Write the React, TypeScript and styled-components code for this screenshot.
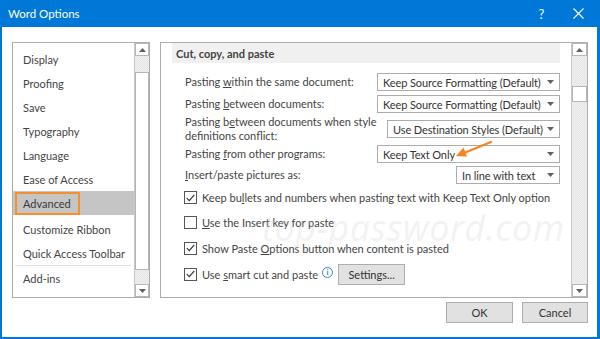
import React from "react";
import styled, { createGlobalStyle } from "styled-components";

const GlobalStyle = createGlobalStyle`
  html, body {
    margin: 0;
    padding: 0;
    background: #ffffff;
  }
  body {
    font-family: "Segoe UI", Lato, "Noto Sans", Arial, sans-serif;
    font-size: 11px;
    color: #444444;
  }
`;

const Window = styled.div`
  position: relative;
  width: 600px;
  height: 339px;
  box-sizing: border-box;
  display: flex;
  flex-direction: column;
  background: #0078d7;
  padding: 0 3px 2px 2px;
  overflow: hidden;
`;

const TitleBar = styled.div`
  height: 27px;
  flex-shrink: 0;
  display: flex;
  align-items: center;
  color: #ffffff;
  font-size: 11.5px;
  padding-left: 6px;
`;

const TitleText = styled.div`
  flex: 1;
`;

const TitleButton = styled.div`
  width: 37px;
  height: 27px;
  display: flex;
  align-items: center;
  justify-content: center;
  font-size: 13px;
`;

const Body = styled.div`
  flex: 1;
  background: #ffffff;
  display: flex;
  flex-direction: column;
  padding: 15px 9px 0 10px;
`;

const Panels = styled.div`
  display: flex;
  gap: 10px;
  height: 256px;
`;

const Panel = styled.div<{ $width?: number }>`
  box-sizing: border-box;
  ${(p) => (p.$width ? `width: ${p.$width}px; flex-shrink: 0;` : "flex: 1; min-width: 0;")}
  border: 1px solid #acacac;
  display: flex;
  overflow: hidden;
`;

const NavList = styled.div`
  flex: 1;
  display: flex;
  flex-direction: column;
  padding-top: 4px;
`;

const NavItem = styled.div<{ $selected?: boolean }>`
  height: 24px;
  flex-shrink: 0;
  display: flex;
  align-items: center;
  padding-left: 10px;
  white-space: nowrap;
  background: ${(p) => (p.$selected ? "#c5c5c5" : "transparent")};
  margin-bottom: ${(p) => (p.$selected ? "2px" : "0")};
`;

const Focus = styled.span`
  border: 2px solid #f5902a;
  margin-left: -8px;
  padding: 1px 7px 1px 6px;
  line-height: 17px;
  color: #3a3a3a;
`;

const NavSeparator = styled.div`
  height: 1px;
  margin: 0 3px 0 2px;
  background: #e2e2e2;
`;

const Scrollbar = styled.div<{ $width: number }>`
  width: ${(p) => p.$width}px;
  flex-shrink: 0;
  border-left: 1px solid #c8c8c8;
  display: flex;
  flex-direction: column;
`;

const ScrollButton = styled.div`
  height: 13px;
  flex-shrink: 0;
  box-sizing: border-box;
  border: 1px solid #b8b8b8;
  background: #ffffff;
  display: flex;
  align-items: center;
  justify-content: center;
`;

const Track = styled.div`
  flex: 1;
  display: flex;
  flex-direction: column;
  background: repeating-conic-gradient(#e3e3e3 0 25%, #f2f2f2 0 50%) 0 0 / 2px 2px;
`;

const Thumb = styled.div<{ $top: number; $height: number }>`
  margin-top: ${(p) => p.$top}px;
  height: ${(p) => p.$height}px;
  box-sizing: border-box;
  border: 1px solid #b5b5b5;
  background: #ffffff;
`;

const Content = styled.div`
  flex: 1;
  min-width: 0;
  padding: 0 11px 0 11px;
  display: flex;
  flex-direction: column;
`;

const SectionHeader = styled.div`
  height: 20px;
  flex-shrink: 0;
  display: flex;
  align-items: center;
  background: #f0f0f0;
  padding-left: 4px;
  font-weight: bold;
  color: #444444;
  margin-bottom: 8px;
`;

const OptionRow = styled.div<{ $height: number }>`
  height: ${(p) => p.$height}px;
  flex-shrink: 0;
  display: flex;
  align-items: center;
  padding-left: 13px;
  justify-content: space-between;
`;

const Label = styled.div`
  line-height: 14px;
  white-space: nowrap;
`;

const Select = styled.div<{ $width: number }>`
  width: ${(p) => p.$width}px;
  height: 18px;
  box-sizing: border-box;
  border: 1px solid #acacac;
  display: flex;
  align-items: center;
  padding: 0 5px 0 5px;
  color: #333333;
  flex-shrink: 0;
  letter-spacing: -0.1px;
`;

const SelectText = styled.span`
  flex: 1;
  min-width: 0;
  white-space: nowrap;
  overflow: hidden;
`;

const CheckRow = styled.div<{ $height?: number }>`
  height: ${(p) => p.$height ?? 25}px;
  flex-shrink: 0;
  display: flex;
  align-items: center;
  padding-left: 12px;
  gap: 5px;
  white-space: nowrap;
`;

const Box = styled.div`
  width: 13px;
  height: 13px;
  box-sizing: border-box;
  border: 1px solid #555555;
  background: #ffffff;
  display: flex;
  align-items: center;
  justify-content: center;
  flex-shrink: 0;
`;

const InfoIcon = styled.span`
  width: 9px;
  height: 9px;
  border: 1px solid #3c7fd1;
  border-radius: 50%;
  color: #3c7fd1;
  font-size: 8px;
  line-height: 9px;
  text-align: center;
  margin: -4px 0 0 -1px;
  font-weight: bold;
`;

const SmallButton = styled.div<{ $width: number }>`
  width: ${(p) => p.$width}px;
  height: 21px;
  box-sizing: border-box;
  border: 1px solid #adadad;
  background: #e1e1e1;
  display: flex;
  align-items: center;
  justify-content: center;
  color: #333333;
  flex-shrink: 0;
`;

const SettingsButton = styled(SmallButton)`
  margin-left: 0;
`;

const Footer = styled.div`
  display: flex;
  justify-content: flex-end;
  gap: 9px;
  padding-top: 4px;
`;

const Watermark = styled.div`
  position: absolute;
  left: 262px;
  top: 203px;
  font-family: "Noto Sans", sans-serif;
  font-style: italic;
  font-size: 36px;
  color: rgba(200, 200, 200, 0.22);
  pointer-events: none;
  letter-spacing: 0.5px;
`;

const ArrowOverlay = styled.svg`
  position: absolute;
  left: 450px;
  top: 136px;
  pointer-events: none;
`;

const Up = () => (
  <svg width="7" height="4" viewBox="0 0 7 4">
    <path d="M0 4 L3.5 0 L7 4 Z" fill="#606060" />
  </svg>
);

const Down = () => (
  <svg width="7" height="4" viewBox="0 0 7 4" style={{ flexShrink: 0 }}>
    <path d="M0 0 L3.5 4 L7 0 Z" fill="#606060" />
  </svg>
);

const Check = () => (
  <svg width="9" height="8" viewBox="0 0 9 8">
    <path d="M0.8 4.2 L3.3 6.7 L8.3 0.8" fill="none" stroke="#333" strokeWidth="1.2" />
  </svg>
);

function Dropdown({ width, children }: { width: number; children: React.ReactNode }) {
  return (
    <Select $width={width}>
      <SelectText>{children}</SelectText>
      <Down />
    </Select>
  );
}

function Checkbox({ checked }: { checked?: boolean }) {
  return <Box>{checked && <Check />}</Box>;
}

const navItems = [
  "Display",
  "Proofing",
  "Save",
  "Typography",
  "Language",
  "Ease of Access",
];

export default function App() {
  return (
    <>
      <GlobalStyle />
      <Window>
        <TitleBar>
          <TitleText>Word Options</TitleText>
          <TitleButton>?</TitleButton>
          <TitleButton>
            <svg width="11" height="11" viewBox="0 0 11 11">
              <path d="M0.5 0.5 L10.5 10.5 M10.5 0.5 L0.5 10.5" stroke="#fff" strokeWidth="1.1" />
            </svg>
          </TitleButton>
        </TitleBar>
        <Body>
          <Panels>
            <Panel $width={138}>
              <NavList>
                {navItems.map((n) => (
                  <NavItem key={n}>{n}</NavItem>
                ))}
                <NavItem $selected>
                  <Focus>Advanced</Focus>
                </NavItem>
                <NavItem>Customize Ribbon</NavItem>
                <NavItem>Quick Access Toolbar</NavItem>
                <NavSeparator />
                <NavItem>Add-ins</NavItem>
              </NavList>
              <Scrollbar $width={14}>
                <ScrollButton>
                  <Up />
                </ScrollButton>
                <Track>
                  <Thumb $top={16} $height={198} />
                </Track>
                <ScrollButton>
                  <Down />
                </ScrollButton>
              </Scrollbar>
            </Panel>
            <Panel>
              <Content>
                <SectionHeader>Cut, copy, and paste</SectionHeader>
                <OptionRow $height={22}>
                  <Label>
                    Pasting <u>w</u>ithin the same document:
                  </Label>
                  <Dropdown width={183}>Keep Source Formatting (Default)</Dropdown>
                </OptionRow>
                <OptionRow $height={22}>
                  <Label>
                    Pasting <u>b</u>etween documents:
                  </Label>
                  <Dropdown width={183}>Keep Source Formatting (Default)</Dropdown>
                </OptionRow>
                <OptionRow $height={28}>
                  <Label>
                    Pasting b<u>e</u>tween documents when style
                    <br />
                    definitions conflict:
                  </Label>
                  <Dropdown width={173}>Use Destination Styles (Default)</Dropdown>
                </OptionRow>
                <OptionRow $height={22}>
                  <Label>
                    Pasting <u>f</u>rom other programs:
                  </Label>
                  <Dropdown width={183}>Keep Text Only</Dropdown>
                </OptionRow>
                <OptionRow $height={20}>
                  <Label>
                    <u>I</u>nsert/paste pictures as:
                  </Label>
                  <Dropdown width={104}>In line with text</Dropdown>
                </OptionRow>
                <CheckRow>
                  <Checkbox checked />
                  <span>
                    Keep bu<u>l</u>lets and numbers when pasting text with Keep Text Only option
                  </span>
                </CheckRow>
                <CheckRow>
                  <Checkbox />
                  <span>
                    <u>U</u>se the Insert key for paste
                  </span>
                </CheckRow>
                <CheckRow $height={26}>
                  <Checkbox checked />
                  <span>
                    Show Paste <u>O</u>ptions button when content is pasted
                  </span>
                </CheckRow>
                <CheckRow $height={26}>
                  <Checkbox checked />
                  <span>
                    Use <u>s</u>mart cut and paste
                  </span>
                  <InfoIcon>i</InfoIcon>
                  <SettingsButton $width={67}>Settings...</SettingsButton>
                </CheckRow>
              </Content>
              <Scrollbar $width={15}>
                <ScrollButton>
                  <Up />
                </ScrollButton>
                <Track>
                  <Thumb $top={30} $height={16} />
                </Track>
                <ScrollButton>
                  <Down />
                </ScrollButton>
              </Scrollbar>
            </Panel>
          </Panels>
          <Footer>
            <SmallButton $width={67}>OK</SmallButton>
            <SmallButton $width={66}>Cancel</SmallButton>
          </Footer>
        </Body>
        <Watermark>top-password.com</Watermark>
        <ArrowOverlay width="50" height="30" viewBox="0 0 50 30">
          <path d="M41 6 L14 17" stroke="#f5841f" strokeWidth="2.2" strokeLinecap="round" />
          <path d="M6 20 L13.5 11.5 L17 20.5 Z" fill="#f5841f" />
        </ArrowOverlay>
      </Window>
    </>
  );
}
